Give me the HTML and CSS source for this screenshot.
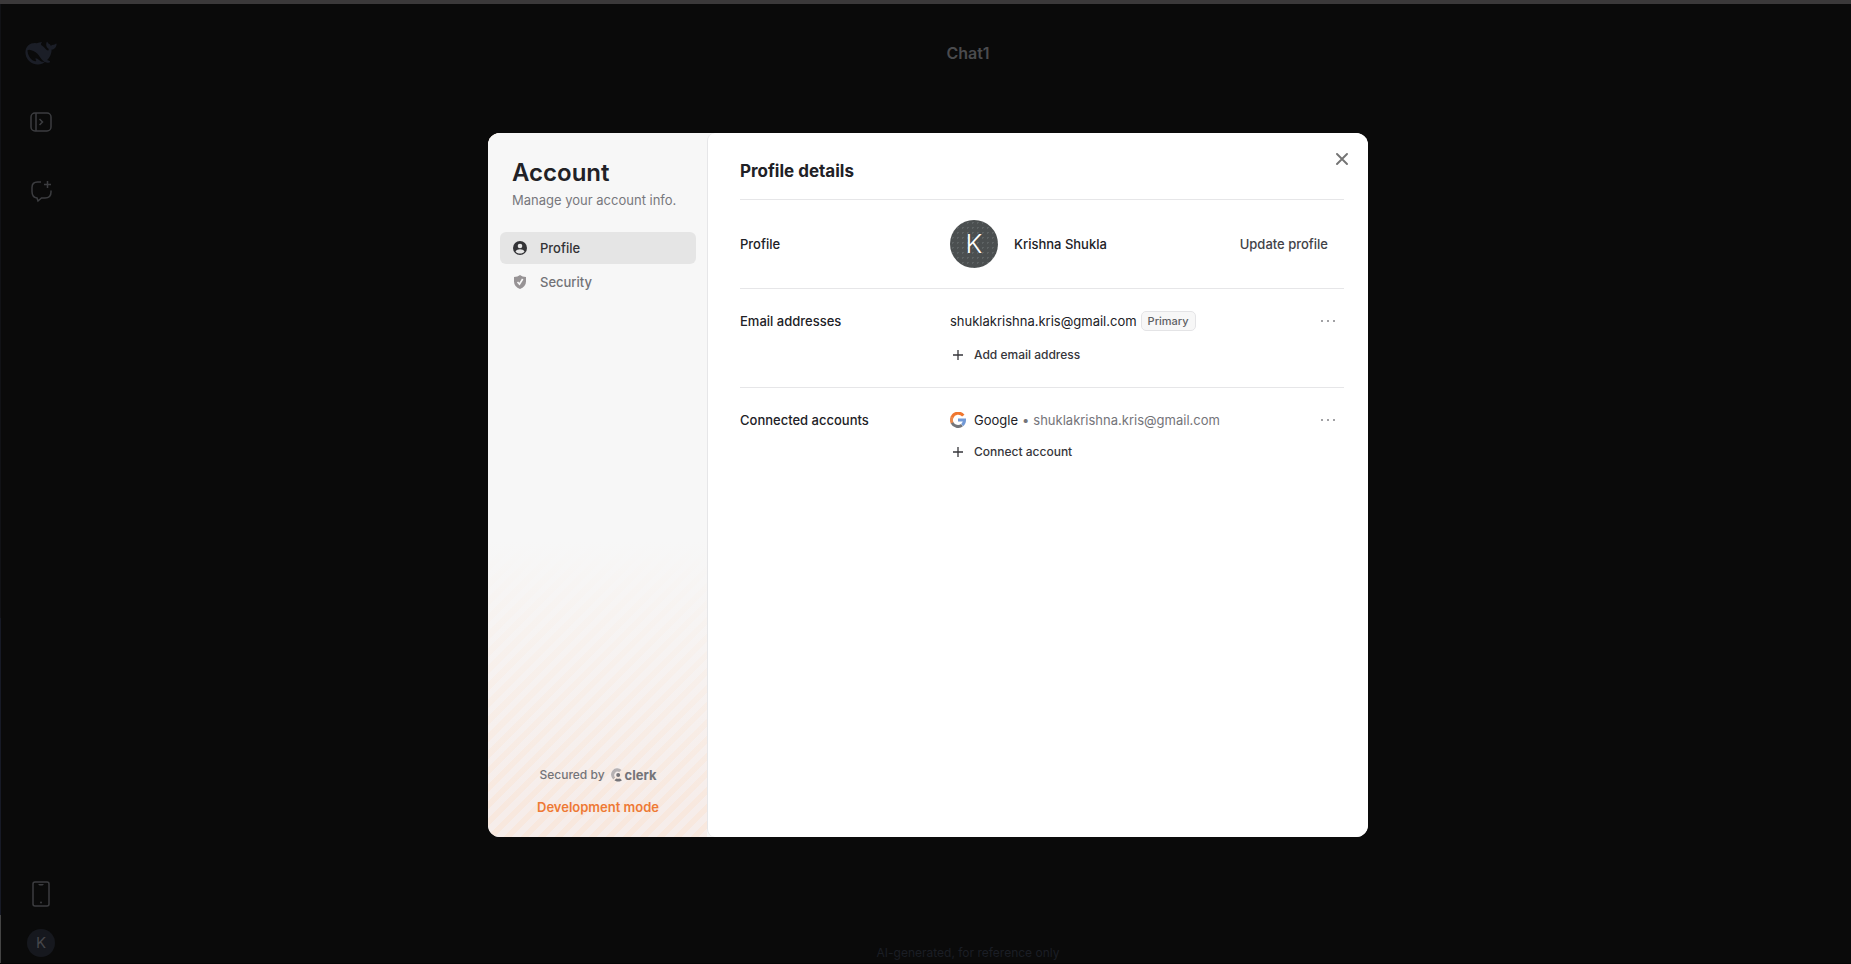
FILE: index.html
```html
<!DOCTYPE html>
<html lang="en">
<head>
  <meta charset="UTF-8">
  <meta name="viewport" content="width=device-width, initial-scale=1.0">
  <title>Chat1</title>
  <link rel="stylesheet" href="styles.css">
</head>
<body>

<!-- Chat page -->
<div class="page">
  <nav class="rail">
    <a href="#" class="rail-link" aria-label="Home">
      <svg class="whale" viewBox="0 2.5 24 18.5" width="32" height="24"><path fill="currentColor" d="M23.748 4.482c-.254-.124-.364.113-.512.234-.051.039-.094.09-.137.136-.372.397-.806.657-1.373.626-.829-.046-1.537.214-2.163.848-.133-.782-.575-1.248-1.247-1.548-.352-.156-.708-.311-.955-.65-.172-.241-.219-.51-.305-.774-.055-.16-.11-.323-.293-.35-.2-.031-.278.136-.356.276-.313.572-.434 1.202-.422 1.84.027 1.436.633 2.58 1.838 3.393.137.093.172.187.129.323-.082.28-.18.552-.266.833-.055.179-.137.217-.329.14a5.526 5.526 0 01-1.736-1.18c-.857-.828-1.631-1.742-2.597-2.458a11.365 11.365 0 00-.689-.471c-.985-.957.13-1.743.388-1.836.27-.098.093-.432-.779-.428-.872.004-1.67.295-2.687.684a3.055 3.055 0 01-.465.137 9.597 9.597 0 00-2.883-.102c-1.885.21-3.39 1.102-4.497 2.623C.082 8.606-.231 10.684.152 12.85c.403 2.284 1.569 4.175 3.36 5.653 1.858 1.533 3.997 2.284 6.438 2.14 1.482-.085 3.133-.284 4.994-1.86.47.234.962.327 1.78.397.63.059 1.236-.03 1.705-.128.735-.156.684-.837.419-.961-2.155-1.004-1.682-.595-2.113-.926 1.096-1.296 2.746-2.642 3.392-7.003.05-.347.007-.565 0-.845-.004-.17.035-.237.23-.256a4.173 4.173 0 001.545-.475c1.396-.763 1.96-2.015 2.093-3.517.02-.23-.004-.467-.247-.588zM11.581 18c-2.089-1.642-3.102-2.183-3.52-2.16-.392.024-.321.471-.235.763.09.288.207.486.371.739.114.167.192.416-.113.603-.673.416-1.842-.14-1.897-.167-1.361-.802-2.5-1.86-3.301-3.307-.774-1.393-1.224-2.887-1.298-4.482-.02-.386.093-.522.477-.592a4.696 4.696 0 011.529-.039c2.132.312 3.946 1.265 5.468 2.774.868.86 1.525 1.887 2.202 2.891.72 1.066 1.494 2.082 2.48 2.914.348.292.625.514.891.677-.802.09-2.14.11-3.054-.614z"/></svg>
    </a>
    <button class="rail-link" aria-label="Open sidebar">
      <svg viewBox="0 0 24 24" width="24" height="24" fill="none" stroke="currentColor" stroke-width="1.500"><rect x="2" y="3" width="20" height="18" rx="4"/><path d="M7 3v18M10.500 9l3 3-3 3"/></svg>
    </button>
    <button class="rail-link" aria-label="New chat">
      <svg viewBox="0 0 24 24" width="24" height="24" fill="none" stroke="currentColor" stroke-width="1.500"><path d="M12 3H8.500C5 3 3 5 3 8.500v4C3 16 4.500 18.500 8 19l1 3 3.500-3H16c4 0 6-2 6-6v-1.500M18.500 2v7M15 5.500h7"/></svg>
    </button>
    <button class="rail-link rail-phone" aria-label="Get app">
      <svg viewBox="0 0 20 28" width="20" height="28" fill="none" stroke="currentColor"><rect x="2" y="2" width="16" height="24" rx="2" stroke-width="1.500"/><path d="M7 4h6l-1.500 1.500h-3z" fill="currentColor" stroke="none"/><circle cx="10" cy="22.500" r="1" fill="currentColor" stroke="none"/></svg>
    </button>
    <button class="rail-avatar" aria-label="Open account menu">K</button>
  </nav>
  <main class="chat">
    <h1 class="chat-title">Chat1</h1>
    <p class="chat-note">AI-generated, for reference only</p>
  </main>
</div>

<!-- Account dialog -->
<div class="backdrop">
  <div class="modal" role="dialog" aria-label="Account">
    <aside class="side">
      <h2 class="side-title">Account</h2>
      <p class="side-text">Manage your account info.</p>
      <nav class="side-nav">
        <a href="#" class="side-link active">
          <svg viewBox="0 0 16 16" width="16" height="16"><circle cx="8" cy="8" r="7" fill="currentColor"/><circle cx="8" cy="6" r="2.300" fill="#e5e5e5"/><path d="M3.500 11.500C4.300 10 6 9.300 8 9.300s3.700.7 4.500 2.200C11.500 12.900 9.900 13.500 8 13.500s-3.500-.6-4.500-2z" fill="#e5e5e5"/></svg>
          Profile
        </a>
        <a href="#" class="side-link">
          <svg viewBox="0 0 16 16" width="16" height="16"><path fill="currentColor" d="M8 1c1.500 1.300 3.500 2 6 2v4.500c0 3.500-2.300 6-6 7.500-3.700-1.500-6-4-6-7.500V3c2.500 0 4.500-.7 6-2z"/><path d="M5.500 8l2 2.200L10.700 5" fill="none" stroke="#f7f7f7" stroke-width="1.700"/></svg>
          Security
        </a>
      </nav>
      <div class="side-footer">
        <p class="secured">Secured by
          <a href="#" class="clerk">
            <svg viewBox="0 0 12 14" width="12" height="14"><path d="M10.500 1.900A6 6 0 002.200 11.400l2-2A3.400 3.400 0 018.300 4.100z" fill="currentColor" opacity=".5"/><circle cx="7.200" cy="7" r="2" fill="currentColor"/><path d="M3.400 12.200l2-1.800c1.200.6 2.400.6 3.600 0l2 1.800c-2 1.800-5.600 1.800-7.600 0z" fill="currentColor"/></svg>
            clerk
          </a>
        </p>
        <p class="dev-mode">Development mode</p>
      </div>
    </aside>

    <section class="content">
      <button class="close" aria-label="Close">
        <svg viewBox="0 0 12 12" width="12" height="12" fill="none" stroke="currentColor" stroke-width="1.900" stroke-linecap="round"><path d="M1 1l10 10M11 1L1 11"/></svg>
      </button>
      <h2 class="content-title">Profile details</h2>

      <div class="row row-profile">
        <h3 class="row-label">Profile</h3>
        <span class="avatar">K</span>
        <span class="name">Krishna Shukla</span>
        <button class="update">Update profile</button>
      </div>

      <div class="row">
        <h3 class="row-label">Email addresses</h3>
        <div class="row-body emails">
          <div class="item">
            <span>shuklakrishna.kris@gmail.com</span>
            <span class="badge">Primary</span>
            <button class="dots" aria-label="Email options"><svg viewBox="0 0 16 4" width="16" height="4" fill="currentColor"><path d="M1 1h2v2H1zM7 1h2v2H7zM13 1h2v2h-2z"/></svg></button>
          </div>
          <button class="add">
            <svg viewBox="0 0 16 16" width="16" height="16" stroke="currentColor" stroke-width="1.300"><path d="M8 3v10M3 8h10"/></svg>
            Add email address
          </button>
        </div>
      </div>

      <div class="row">
        <h3 class="row-label">Connected accounts</h3>
        <div class="row-body">
          <div class="item">
            <svg class="google" viewBox="0 0 16 16" width="16" height="16" fill="none" stroke-width="3"><path d="M13.300 3.700A6.500 6.500 0 002 5.500" stroke="#f0772f"/><path d="M2.200 5A6.500 6.500 0 002.300 11.200" stroke="#e88a4e"/><path d="M2.100 10.800A6.500 6.500 0 0012 13.100" stroke="#74767b"/><path d="M8 8h6.500c0 2-.8 3.900-2.300 5" stroke="#7199d6"/></svg>
            <span>Google</span>
            <span class="muted bullet">•</span>
            <span class="muted">shuklakrishna.kris@gmail.com</span>
            <button class="dots" aria-label="Account options"><svg viewBox="0 0 16 4" width="16" height="4" fill="currentColor"><path d="M1 1h2v2H1zM7 1h2v2H7zM13 1h2v2h-2z"/></svg></button>
          </div>
          <button class="add">
            <svg viewBox="0 0 16 16" width="16" height="16" stroke="currentColor" stroke-width="1.300"><path d="M8 3v10M3 8h10"/></svg>
            Connect account
          </button>
        </div>
      </div>
    </section>
  </div>
</div>

</body>
</html>
```
FILE: styles.css
```css
* {
  box-sizing: border-box;
}
body {
  margin: 0;
  background-color: #0a0a0a;
  font-family: Inter, "Liberation Sans", sans-serif;
  font-size: 13px;
  line-height: 24px;
  color: #212126;
}
h1, h2, h3, p {
  margin: 0;
}
a {
  color: inherit;
  text-decoration: none;
}
button {
  padding: 0;
  border: none;
  background: none;
  font: inherit;
  color: inherit;
  cursor: pointer;
}
svg {
  display: block;
  flex: none;
}

/* Chat page */
.page {
  display: flex;
  min-height: 100vh;
  border-top: 4px solid #3b393a;
  border-bottom: 1px solid #050505;
}
.page::before {
  content: "";
  width: 1px;
  background: linear-gradient(#111216 64%, #171a26 64%, #171a26 95%, #444 95%);
}
.rail {
  display: flex;
  flex-direction: column;
  align-items: center;
  gap: 45px;
  width: 84px;
  padding: 37px 4px 6px 0;
  color: #3c3d40;
}
.whale {
  color: #1b1e27;
}
.rail-phone {
  margin-top: auto;
  margin-bottom: -24px;
}
.rail-avatar {
  width: 28px;
  height: 28px;
  border-radius: 50%;
  background-color: #16181e;
  color: #46474b;
  font-size: 15px;
}
.chat {
  flex: 1;
  display: flex;
  flex-direction: column;
  justify-content: space-between;
  align-items: center;
  padding: 37px 0 0;
}
.chat-title {
  font-size: 16px;
  font-weight: 600;
  color: #4a4b4e;
}
.chat-note {
  font-size: 12px;
  line-height: 20px;
  color: #1b1e25;
}

/* Account dialog */
.backdrop {
  position: fixed;
  inset: 0;
  display: flex;
  justify-content: center;
  align-items: center;
  padding: 6px 0 0 5px;
}
.modal {
  display: flex;
  width: 880px;
  max-width: 95vw;
  height: 704px;
  max-height: 90vh;
  border-radius: 12px;
  background-color: #f7f7f7;
  overflow: hidden;
}
.side {
  display: flex;
  flex-direction: column;
  width: 219px;
  padding: 24px 11px 18px 12px;
  background: linear-gradient(#f7f7f7 58%, rgba(247, 247, 247, 0) 96%),
    repeating-linear-gradient(-45deg, #f6edea 0 6px, #f8e8de 6px 12px);
}
.side-title {
  padding-left: 12px;
  font-size: 24px;
  font-weight: 600;
  line-height: 32px;
}
.side-text {
  margin-top: 1px;
  padding-left: 12px;
  line-height: 20px;
  color: #77777d;
}
.side-nav {
  display: flex;
  flex-direction: column;
  gap: 2px;
  margin-top: 22px;
}
.side-link {
  display: flex;
  align-items: center;
  gap: 12px;
  height: 32px;
  padding: 0 12px;
  border-radius: 6px;
  font-weight: 500;
  color: #727276;
}
.side-link svg {
  color: #979395;
}
.side-link.active,
.side-link.active svg {
  color: #333336;
}
.side-link.active {
  background-color: #e5e5e5;
}
.side-footer {
  margin-top: auto;
  text-align: center;
}
.secured {
  display: flex;
  justify-content: center;
  align-items: center;
  gap: 6px;
  margin-bottom: 8px;
  font-size: 12px;
  font-weight: 500;
  color: #747479;
}
.clerk {
  display: flex;
  align-items: center;
  gap: 2px;
  font-size: 13px;
  font-weight: 700;
}
.dev-mode {
  font-weight: 600;
  color: #ee7a35;
}

.content {
  flex: 1;
  position: relative;
  padding: 26px 24px 0 32px;
  border-left: 1px solid #e6e6e8;
  border-radius: 8px;
  background-color: white;
}
.close {
  position: absolute;
  top: 20px;
  right: 20px;
  color: #747474;
}
.content-title {
  padding-bottom: 16px;
  font-size: 17px;
  font-weight: 700;
}
.row {
  display: flex;
  padding: 20px 0;
  border-top: 1px solid #e6e6e8;
}
.row-profile {
  align-items: center;
}
.row-label {
  width: 210px;
  flex: none;
  font-size: 13px;
  font-weight: 500;
}
.row-body {
  flex: 1;
  display: flex;
  flex-direction: column;
  align-items: flex-start;
  gap: 8px;
}
.emails {
  gap: 10px;
}
.avatar {
  width: 48px;
  height: 48px;
  margin-right: 16px;
  border-radius: 50%;
  background: radial-gradient(circle, #5d6263 0 1px, transparent 1px) 0 0 / 5px 5px #4b4f50;
  color: white;
  font-size: 26px;
  font-weight: 300;
  line-height: 48px;
  text-align: center;
}
.name {
  font-weight: 500;
}
.update {
  margin-left: auto;
  padding-right: 16px;
  font-weight: 500;
  color: #424247;
}
.item {
  display: flex;
  align-items: center;
  align-self: stretch;
  height: 24px;
}
.google {
  margin-right: 8px;
}
.muted {
  color: #747479;
}
.bullet {
  margin: 0 4px;
}
.badge {
  margin-left: 4px;
  padding: 0 6px;
  border: 1px solid #e4e4e6;
  border-radius: 5px;
  background-color: #f7f7f7;
  font-size: 11px;
  font-weight: 500;
  line-height: 18px;
  color: #5e5f63;
}
.dots {
  margin-left: auto;
  padding: 8px;
  color: #a2a2a5;
}
.add {
  display: flex;
  align-items: center;
  gap: 8px;
  font-size: 12px;
  font-weight: 500;
  color: #36363b;
}
```
